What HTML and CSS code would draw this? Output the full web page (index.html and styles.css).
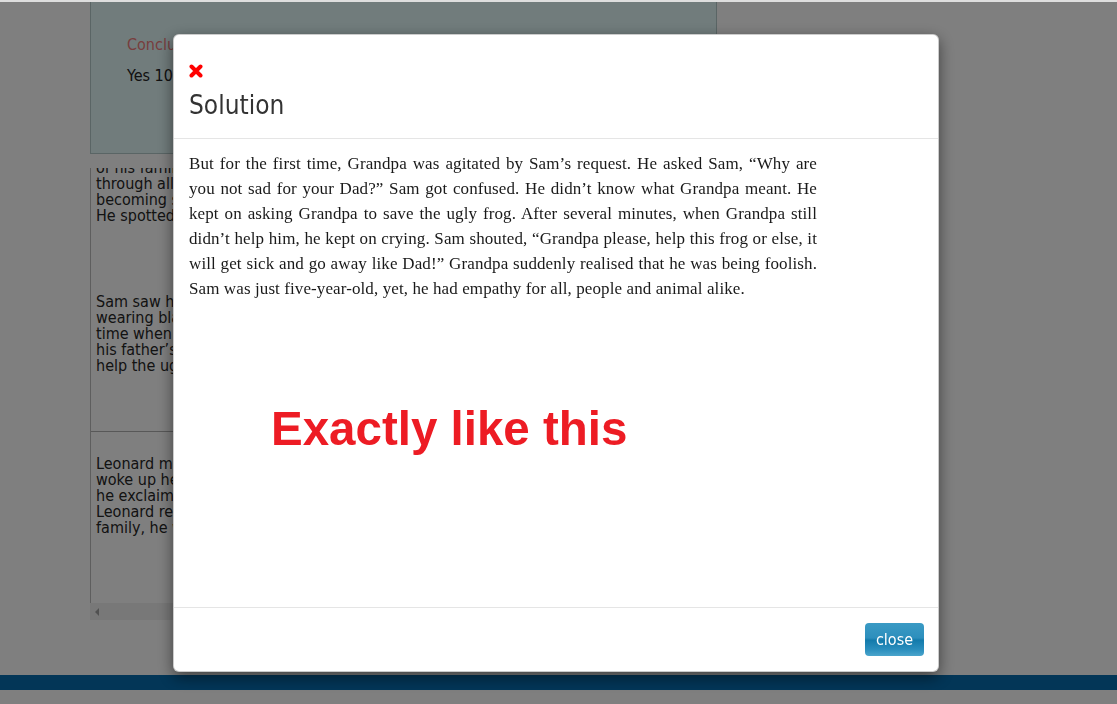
FILE: index.html
```html
<!DOCTYPE html>
<html lang="en">
<head>
<meta charset="utf-8">
<title>Solution</title>
<link rel="stylesheet" href="styles.css">
</head>
<body>
<div class="topline"></div>
<div class="page">
  <div class="summary">
    <p class="concl">Conclusion</p>
    <p class="yes">Yes 100%</p>
  </div>
  <div class="story">
    <div class="story-view">
      <div class="story-sec first">
        <p class="story-p">of his family<br>through all<br>becoming sad<br>He spotted a</p>
        <p class="story-p">Sam saw his<br>wearing black<br>time when he<br>his father’s<br>help the ugly</p>
      </div>
      <div class="story-sec second">
        <p class="story-p">Leonard made<br>woke up he<br>he exclaimed<br>Leonard real<br>family, he w</p>
      </div>
    </div>
    <div class="hscroll"><span class="arrow-left"></span></div>
  </div>
</div>
<div class="bluebar"></div>

<div class="overlay"></div>

<div class="modal">
  <div class="modal-header">
    <svg class="x-icon" width="14" height="14" viewBox="0 0 14 14" aria-hidden="true">
      <path d="M2.5 2.5 L11.5 11.5 M11.5 2.5 L2.5 11.5" stroke="#ff0000" stroke-width="4" stroke-linecap="round" fill="none"/>
    </svg>
    <h4 class="modal-title">Solution</h4>
  </div>
  <div class="modal-body">
    <div class="solution-text">
      <span class="ln">But for the first time, Grandpa was agitated by Sam’s request. He asked Sam, “Why are</span>
      <span class="ln">you not sad for your Dad?” Sam got confused. He didn’t know what Grandpa meant. He</span>
      <span class="ln">kept on asking Grandpa to save the ugly frog. After several minutes, when Grandpa still</span>
      <span class="ln">didn’t help him, he kept on crying. Sam shouted, “Grandpa please, help this frog or else, it</span>
      <span class="ln">will get sick and go away like Dad!” Grandpa suddenly realised that he was being foolish.</span>
      <span class="ln last">Sam was just five-year-old, yet, he had empathy for all, people and animal alike.</span>
    </div>
    <h2 class="note">Exactly like this</h2>
  </div>
  <div class="modal-footer">
    <button class="btn-close" type="button">close</button>
  </div>
</div>
</body>
</html>
```

FILE: styles.css
```css
* { box-sizing: border-box; }

html, body {
  margin: 0;
  padding: 0;
  background: #ffffff;
  height: 100%;
  overflow: hidden;
}

body {
  font-family: "DejaVu Sans Condensed", "DejaVu Sans", sans-serif;
  font-stretch: condensed;
  color: #333;
}

.topline {
  height: 2px;
  background: #dedede;
}

.page {
  margin-left: 90px;
  width: 627px;
}

.summary {
  height: 152px;
  background: #e2f8f8;
  border: 1px solid #b4caca;
  border-top: 0;
  padding: 35px 36px 0;
  font-size: 16px;
  line-height: 16px;
}

.summary p { margin: 0; white-space: nowrap; }
.concl { color: #f07c7c; }
.yes { margin-top: 15px !important; color: #222; }

.story {
  margin-top: 14px;
}

.story-view {
  height: 435px;
  overflow: hidden;
  border-left: 1px solid #bdbdbd;
  font-size: 16px;
  line-height: 16px;
  color: #262626;
}

.story-sec { padding: 0 5px; }

.story-sec.first {
  height: 271px;
  margin-top: -8px;
}

.story-sec.second {
  border-top: 1px solid #b0b0b0;
  padding-top: 24px;
}

.story-p {
  margin: 0;
  white-space: nowrap;
}

.story-p + .story-p { margin-top: 70px; }

.hscroll {
  height: 17px;
  background: #f0f0f0;
  display: flex;
  align-items: center;
  padding-left: 5px;
}

.arrow-left {
  width: 0;
  height: 0;
  border-top: 4px solid transparent;
  border-bottom: 4px solid transparent;
  border-right: 4px solid #a3a3a3;
}

.bluebar {
  margin-top: 55px;
  height: 15px;
  background: #066caf;
}

.overlay {
  position: fixed;
  left: 0;
  right: 0;
  top: 2px;
  bottom: 0;
  background: rgba(0, 0, 0, 0.5);
}

.modal {
  position: fixed;
  top: 34px;
  left: 173px;
  width: 766px;
  height: 638px;
  background: #fff;
  border: 1px solid rgba(0, 0, 0, 0.2);
  border-radius: 6px;
  box-shadow: 0 5px 15px rgba(0, 0, 0, 0.5);
  display: flex;
  flex-direction: column;
}

.modal-header {
  padding: 29px 15px 18px;
  border-bottom: 1px solid #e5e5e5;
}

.x-icon { display: block; }

.modal-title {
  margin: 13px 0 0;
  font-size: 26px;
  line-height: 29px;
  font-weight: normal;
  color: #333;
}

.modal-body {
  flex: 1;
  padding: 12px 15px 0;
}

.solution-text {
  width: 628px;
  font-family: "Liberation Serif", "Times New Roman", serif;
  font-stretch: normal;
  font-size: 17px;
  letter-spacing: 0.1px;
  line-height: 25px;
  color: #1a1a1a;
}

.ln {
  display: block;
  text-align: justify;
  text-align-last: justify;
}

.ln.last { text-align-last: left; }

.note {
  margin: 100px 0 0 82px;
  font-family: "Liberation Sans", Arial, sans-serif;
  font-stretch: normal;
  font-size: 47.5px;
  line-height: 56px;
  font-weight: bold;
  color: #ed1c24;
}

.modal-footer {
  border-top: 1px solid #e5e5e5;
  padding: 15px 14px 15px 15px;
  display: flex;
  justify-content: flex-end;
}

.btn-close {
  height: 33px;
  width: 59px;
  padding: 0;
  border: 0;
  border-radius: 4px;
  color: #fff;
  font-family: "DejaVu Sans Condensed", "DejaVu Sans", sans-serif;
  font-stretch: condensed;
  font-size: 16px;
  background: linear-gradient(to bottom, #3a9ac4 0%, #2d8fbd 45%, #137aab 52%, #2a8ebd 80%, #4aa5cc 100%);
}
```
